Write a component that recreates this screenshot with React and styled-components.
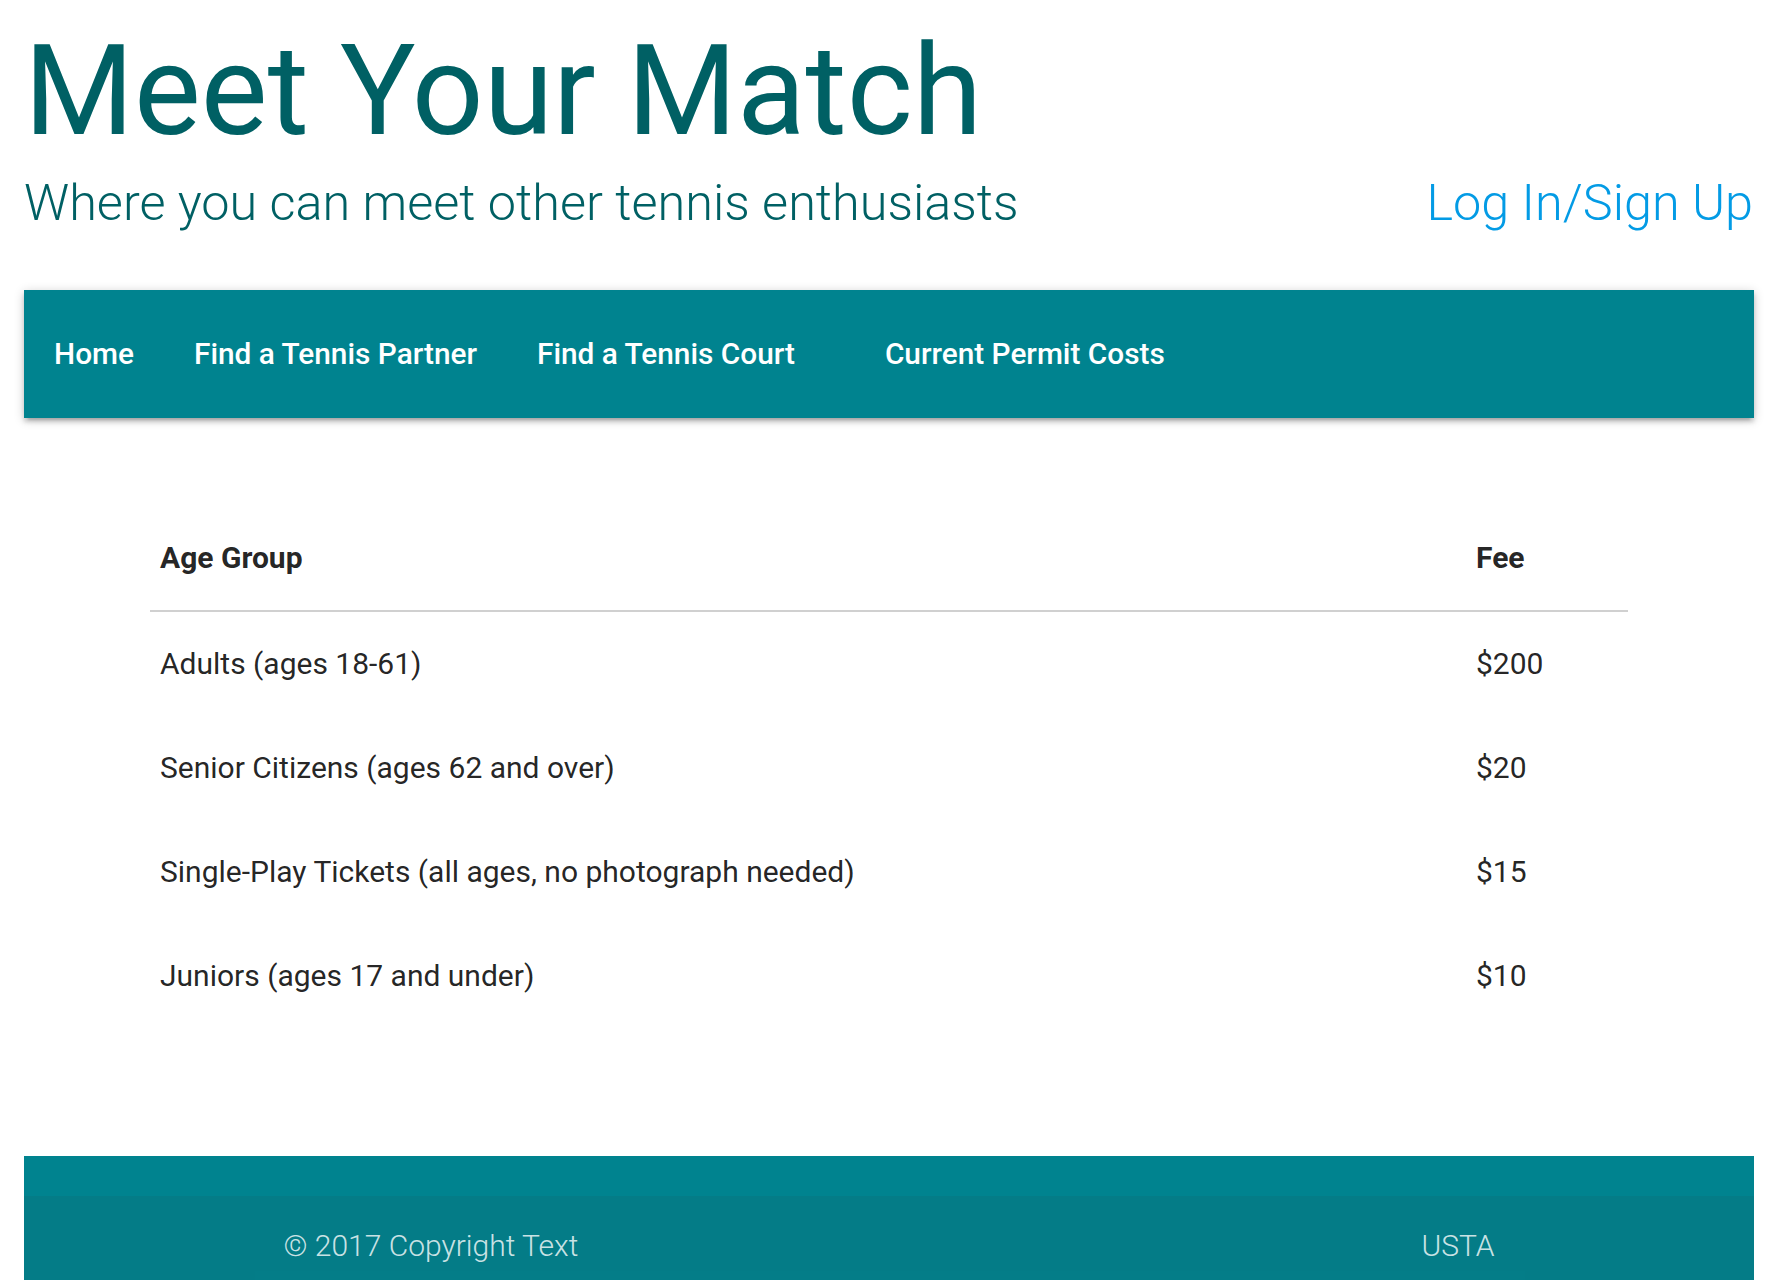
import React from 'react';
import styled, { createGlobalStyle } from 'styled-components';

const GlobalStyle = createGlobalStyle`
    body {
        margin: 0;
        background: #fff;
        font-family: Roboto, "Noto Sans", sans-serif;
        color: rgba(0, 0, 0, 0.87);
    }
`;

const Page = styled.div`
    display: flex;
    flex-direction: column;
`;

const Header = styled.header`
    padding: 22px 30px 0 24px;
`;

const Title = styled.h1`
    margin: 0;
    font-size: 126px;
    line-height: 1.1;
    font-weight: 400;
    color: #006064;
`;

const SubRow = styled.div`
    display: flex;
    justify-content: space-between;
    align-items: baseline;
    margin-top: 15px;
`;

const Subtitle = styled.h5`
    margin: 0;
    font-size: 50.4px;
    line-height: 54px;
    font-weight: 300;
    color: #006064;
`;

const LoginLink = styled.a`
    font-size: 50.4px;
    line-height: 54px;
    font-weight: 300;
    color: #039be5;
    text-decoration: none;
    margin-right: 1px;
`;

const Nav = styled.nav`
    margin: 60px 30px 0 24px;
    height: 128px;
    background: #00838f;
    box-shadow: 0 4px 4px 0 rgba(0, 0, 0, 0.14), 0 6px 2px -4px rgba(0, 0, 0, 0.12), 0 2px 10px 0 rgba(0, 0, 0, 0.2);
`;

const NavList = styled.ul`
    display: flex;
    height: 100%;
    margin: 0;
    padding: 0;
    list-style: none;
`;

const NavItem = styled.li`
    display: flex;
    margin-left: ${({ $gap }) => $gap || 0}px;
`;

const NavLink = styled.a`
    display: flex;
    align-items: center;
    padding: 0 30px;
    font-size: 29.8px;
    font-weight: 500;
    color: #fff;
    text-decoration: none;
`;

const Main = styled.main`
    padding: 87px 156px 0 150px;
`;

const FeeTable = styled.table`
    width: 100%;
    border-collapse: collapse;
    font-size: 30px;
    color: rgba(0, 0, 0, 0.87);

    thead tr {
        border-bottom: 2px solid #d0d0d0;
    }
`;

const Th = styled.th`
    padding: 30px 10px;
    line-height: 45px;
    text-align: left;
    font-weight: 700;
    width: ${({ $w }) => $w || 'auto'};
`;

const Td = styled.td`
    padding: 30px 10px;
    line-height: 44px;
    text-align: left;
    font-weight: 400;
`;

const Footer = styled.footer`
    margin: 128px 30px 0 24px;
    padding-top: 40px;
    background: #00838f;
`;

const CopyrightBar = styled.div`
    height: 100px;
    background: rgba(51, 51, 51, 0.08);
    color: rgba(255, 255, 255, 0.8);
    font-size: 30px;
    font-weight: 300;
    line-height: 100px;
`;

const CopyrightInner = styled.div`
    width: 70%;
    margin: 0 auto;
    display: flex;
    justify-content: space-between;
`;

const links = [
    { label: 'Home' },
    { label: 'Find a Tennis Partner' },
    { label: 'Find a Tennis Court' },
    { label: 'Current Permit Costs', gap: 30 },
];

const fees = [
    ['Adults (ages 18-61)', '$200'],
    ['Senior Citizens (ages 62 and over)', '$20'],
    ['Single-Play Tickets (all ages, no photograph needed)', '$15'],
    ['Juniors (ages 17 and under)', '$10'],
];

function App() {
    return (
        <Page>
            <GlobalStyle />
            <Header>
                <Title>Meet Your Match</Title>
                <SubRow>
                    <Subtitle>Where you can meet other tennis enthusiasts</Subtitle>
                    <LoginLink href="#">Log In/Sign Up</LoginLink>
                </SubRow>
            </Header>
            <Nav>
                <NavList>
                    {links.map((l) => (
                        <NavItem key={l.label} $gap={l.gap}>
                            <NavLink href="#">{l.label}</NavLink>
                        </NavItem>
                    ))}
                </NavList>
            </Nav>
            <Main>
                <FeeTable>
                    <thead>
                        <tr>
                            <Th>Age Group</Th>
                            <Th $w="142px">Fee</Th>
                        </tr>
                    </thead>
                    <tbody>
                        {fees.map(([group, fee]) => (
                            <tr key={group}>
                                <Td>{group}</Td>
                                <Td>{fee}</Td>
                            </tr>
                        ))}
                    </tbody>
                </FeeTable>
            </Main>
            <Footer>
                <CopyrightBar>
                    <CopyrightInner>
                        <span>© 2017 Copyright Text</span>
                        <span>USTA</span>
                    </CopyrightInner>
                </CopyrightBar>
            </Footer>
        </Page>
    );
}

export default App;
